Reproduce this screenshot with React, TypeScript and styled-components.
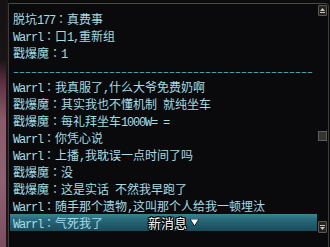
import React from "react";
import styled, { createGlobalStyle } from "styled-components";

const Global = createGlobalStyle`
  html, body { margin: 0; padding: 0; background: #0c0c0d; }
  #root { width: 330px; height: 247px; overflow: hidden; }
`;

const Page = styled.div`
  display: flex;
  width: 330px;
  height: 247px;
  background: #0c0c0d;
`;

const LeftStrip = styled.div`
  width: 8px;
  flex: none;
  background: linear-gradient(
    to bottom,
    #141113 0px,
    #1a1416 60px,
    #5a3040 82px,
    #8a5a6a 120px,
    #8e6272 180px,
    #7a4e5e 247px
  );
  box-shadow: inset -2px 0 0 #1c1416;
`;

const Frame = styled.div`
  flex: 1;
  display: flex;
  margin: 3px 1px 0 0;
  border-top: 1px solid #4a4946;
  border-left: 1px solid #3e3d3b;
  border-right: 1px solid #3e3d3b;
  border-top-right-radius: 4px;
  background: #0a0a0c;
`;

const ChatArea = styled.div`
  flex: 1;
  padding: 6px 1px 0 1px;
  display: flex;
  flex-direction: column;
`;

const Line = styled.div<{ $active?: boolean }>`
  height: 17px;
  line-height: 17px;
  padding-left: 3px;
  white-space: nowrap;
  overflow: hidden;
  color: #a2dde8;
  font-family: "Noto Sans CJK SC", sans-serif;
  font-size: 12px;
  background: ${(p) =>
    p.$active
      ? "linear-gradient(to bottom, #3a8494 0%, #2a6a7a 30%, #1f5868 70%, #1a4c5a 100%)"
      : "transparent"};
`;

const Latin = styled.span`
  font-family: "Liberation Mono", monospace;
  font-size: 12px;
  letter-spacing: -1.2px;
`;

const Colon = styled.span`
  font-family: "Noto Sans CJK TC", sans-serif;
`;

const DashRow = styled(Line)`
  color: #5cc0d2;
`;

const Dashes = styled.span`
  font-family: "Liberation Mono", monospace;
  font-size: 10px;
`;

const LastRow = styled.div`
  position: relative;
`;

const Badge = styled.div`
  position: absolute;
  left: 138px;
  top: 0;
  height: 17px;
  display: flex;
  align-items: center;
  gap: 3px;
  color: #ffffff;
  font-family: "Noto Sans CJK SC", sans-serif;
  font-size: 13px;
  line-height: 17px;
  text-shadow: 1px 0 0 #000, -1px 0 0 #000, 0 1px 0 #000, 0 -1px 0 #000,
    1px 1px 0 #000, -1px -1px 0 #000, 1px -1px 0 #000, -1px 1px 0 #000;
`;

const ScrollBar = styled.div`
  width: 9px;
  flex: none;
  margin: 1px 1px 14px 0;
  display: flex;
  flex-direction: column;
`;

const ArrowButton = styled.div<{ $h: number }>`
  height: ${(p) => p.$h}px;
  box-sizing: border-box;
  border: 1px solid #5a5852;
  border-radius: 1px;
  background: #24231f;
  display: flex;
  align-items: center;
  justify-content: center;
`;

const Track = styled.div`
  position: relative;
  flex: 1;
`;

const Thumb = styled.div<{ $top: number }>`
  position: absolute;
  left: 0;
  top: ${(p) => p.$top}px;
  width: 9px;
  height: 10px;
  box-sizing: border-box;
  border: 1px solid #5e5c56;
  background: #36342f;
`;

const isLatin = (c: string) => c.charCodeAt(0) < 0x2000;

function Rich({ text }: { text: string }) {
  const parts: { latin: boolean; s: string }[] = [];
  for (const ch of text) {
    const l = isLatin(ch);
    const last = parts[parts.length - 1];
    if (last && last.latin === l) last.s += ch;
    else parts.push({ latin: l, s: ch });
  }
  return (
    <>
      {parts.map((p, i) =>
        p.latin ? <Latin key={i}>{p.s}</Latin> : <React.Fragment key={i}>{p.s}</React.Fragment>
      )}
    </>
  );
}

function Message({ name, text }: { name: string; text: string }) {
  return (
    <>
      <Rich text={name} />
      <Colon>：</Colon>
      <Rich text={text} />
    </>
  );
}

const messages: { name: string; text: string }[] = [
  { name: "脱坑177", text: "真费事" },
  { name: "Warrl", text: "口1,重新组" },
  { name: "戳爆魔", text: "1" },
  { name: "---", text: "" },
  { name: "Warrl", text: "我真服了,什么大爷免费奶啊" },
  { name: "戳爆魔", text: "其实我也不懂机制 就纯坐车" },
  { name: "戳爆魔", text: "每礼拜坐车1000W= =" },
  { name: "Warrl", text: "你凭心说" },
  { name: "Warrl", text: "上播,我耽误一点时间了吗" },
  { name: "戳爆魔", text: "没" },
  { name: "戳爆魔", text: "这是实话 不然我早跑了" },
  { name: "Warrl", text: "随手那个遗物,这叫那个人给我一顿埋汰" },
];

const last = { name: "Warrl", text: "气死我了" };

export default function App() {
  return (
    <>
      <Global />
      <Page>
        <LeftStrip />
        <Frame>
          <ChatArea>
            {messages.map((m, i) =>
              m.name === "---" ? (
                <DashRow key={i}>
                  <Dashes>{"–".repeat(50)}</Dashes>
                </DashRow>
              ) : (
                <Line key={i}>
                  <Message name={m.name} text={m.text} />
                </Line>
              )
            )}
            <LastRow>
              <Line $active>
                <Message name={last.name} text={last.text} />
              </Line>
              <Badge>
                <span>新消息</span>
                <svg width="9" height="7" viewBox="0 0 9 7">
                  <path d="M0 0 H9 L4.5 7 Z" fill="#fff" stroke="#000" strokeWidth="0.8" />
                </svg>
              </Badge>
            </LastRow>
          </ChatArea>
          <ScrollBar>
            <ArrowButton $h={11}>
              <svg width="5" height="5" viewBox="0 0 5 5">
                <path d="M2.5 0 L5 3 H0 Z" fill="#c8c6be" />
                <rect x="0" y="4" width="5" height="1" fill="#c8c6be" />
              </svg>
            </ArrowButton>
            <Track>
              <Thumb $top={115} />
            </Track>
            <ArrowButton $h={12}>
              <svg width="5" height="5" viewBox="0 0 5 5">
                <rect x="0" y="0" width="5" height="1" fill="#c8c6be" />
                <path d="M0 2 H5 L2.5 5 Z" fill="#c8c6be" />
              </svg>
            </ArrowButton>
          </ScrollBar>
        </Frame>
      </Page>
    </>
  );
}
